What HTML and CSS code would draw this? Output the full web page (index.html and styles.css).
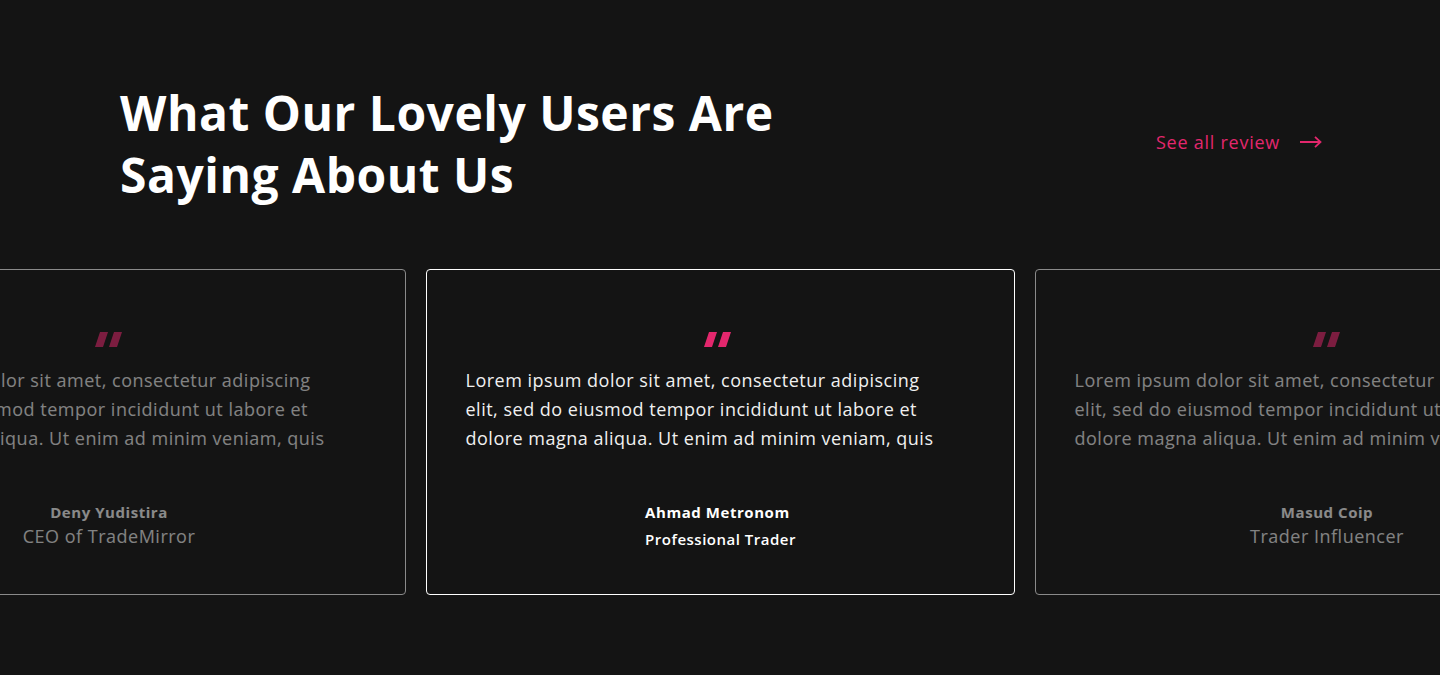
FILE: index.html
```html
<!DOCTYPE html>
<html lang="en">
<head>
<meta charset="utf-8">
<title>Testimonials</title>
<link rel="stylesheet" href="styles.css">
</head>
<body>
<section class="reviews">
  <header class="reviews-head">
    <h1 class="reviews-title">What Our Lovely Users Are<br>Saying About Us</h1>
    <a class="see-all" href="#">See all review
      <svg class="see-all-arrow" width="22" height="12" viewBox="0 0 22 12" aria-hidden="true"><path d="M0 6H20.5M15 0.8L20.5 6L15 11.2" fill="none" stroke="currentColor" stroke-width="1.8"/></svg>
    </a>
  </header>
  <div class="track">
    <article class="card card-side">
      <svg class="quote" width="27" height="15" viewBox="0 0 27 15" aria-hidden="true"><polygon points="5,0 13,0 8,15 0,15"/><polygon points="19,0 27,0 22,15 14,15"/></svg>
      <p class="card-text">Lorem ipsum dolor sit amet, consectetur adipiscing elit, sed do eiusmod tempor incididunt ut labore et dolore magna aliqua. Ut enim ad minim veniam, quis</p>
      <div class="author">
        <div class="author-name">Deny Yudistira</div>
        <div class="author-role">CEO of TradeMirror</div>
      </div>
    </article>
    <article class="card card-active">
      <svg class="quote" width="27" height="15" viewBox="0 0 27 15" aria-hidden="true"><polygon points="5,0 13,0 8,15 0,15"/><polygon points="19,0 27,0 22,15 14,15"/></svg>
      <p class="card-text">Lorem ipsum dolor sit amet, consectetur adipiscing elit, sed do eiusmod tempor incididunt ut labore et dolore magna aliqua. Ut enim ad minim veniam, quis</p>
      <div class="author author-left">
        <div class="author-name">Ahmad Metronom</div>
        <div class="author-role author-role-strong">Professional Trader</div>
      </div>
    </article>
    <article class="card card-side">
      <svg class="quote" width="27" height="15" viewBox="0 0 27 15" aria-hidden="true"><polygon points="5,0 13,0 8,15 0,15"/><polygon points="19,0 27,0 22,15 14,15"/></svg>
      <p class="card-text">Lorem ipsum dolor sit amet, consectetur adipiscing elit, sed do eiusmod tempor incididunt ut labore et dolore magna aliqua. Ut enim ad minim veniam, quis</p>
      <div class="author">
        <div class="author-name">Masud Coip</div>
        <div class="author-role">Trader Influencer</div>
      </div>
    </article>
  </div>
</section>
</body>
</html>
```

FILE: styles.css
```css
* { box-sizing: border-box; }

html, body {
  margin: 0;
  padding: 0;
  background: #141414;
}

body {
  font-family: "Open Sans", "Noto Sans", sans-serif;
  color: #fff;
  overflow: hidden;
  height: 675px;
}

.reviews {
  padding-top: 82px;
}

.reviews-head {
  display: flex;
  align-items: center;
  justify-content: space-between;
  padding: 0 118px 0 120px;
}

.reviews-title {
  margin: 0;
  font-size: 48px;
  font-weight: 700;
  line-height: 62px;
  letter-spacing: 0.5px;
  color: #fff;
}

.see-all {
  display: flex;
  align-items: center;
  gap: 20px;
  color: #e3276d;
  text-decoration: none;
  font-size: 18px;
  font-weight: 500;
  letter-spacing: 0.75px;
  margin-top: -4px;
}

.see-all-arrow {
  display: block;
}

.track {
  display: flex;
  justify-content: center;
  gap: 20px;
  margin-top: 63px;
}

.card {
  flex: 0 0 589px;
  width: 589px;
  height: 326px;
  border: 1px solid #fff;
  border-radius: 4px;
  padding: 62px 40px 0 39px;
  display: flex;
  flex-direction: column;
  background: #141414;
}

.card-side {
  opacity: 0.5;
}

.quote {
  display: block;
  align-self: center;
  fill: #e3276d;
  margin-bottom: 19px;
  margin-left: -4px;
}

.card-text {
  margin: 0;
  padding-right: 25px;
  font-size: 18px;
  line-height: 29px;
  color: #f0f0f0;
  letter-spacing: 0.5px;
}

.author {
  margin-top: 49px;
  text-align: center;
  padding-right: 3px;
}

.author-left {
  align-self: center;
  text-align: left;
  padding-right: 0;
  margin-left: 2px;
}

.author-name {
  font-size: 15px;
  font-weight: 700;
  line-height: 20px;
  letter-spacing: 0.55px;
}

.author-role {
  font-size: 18px;
  line-height: 26px;
  color: #f0f0f0;
  margin-top: 1px;
  letter-spacing: 0.5px;
}

.author-role-strong {
  font-size: 15px;
  font-weight: 600;
  line-height: 20px;
  margin-top: 7px;
  color: #fff;
}
```
